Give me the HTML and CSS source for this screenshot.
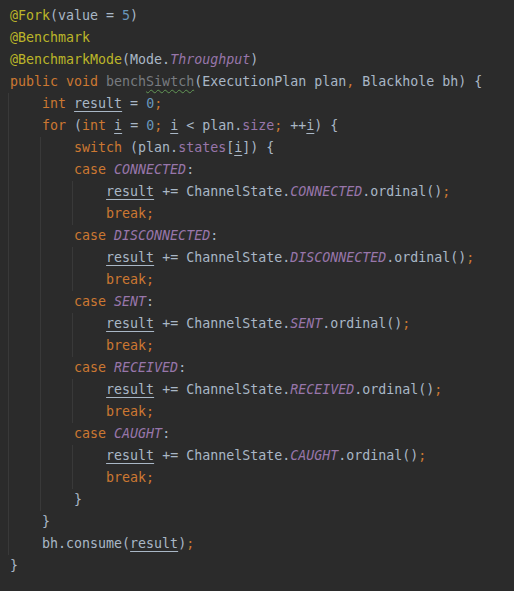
FILE: index.html
```html
<!DOCTYPE html>
<html>
<head>
<meta charset="utf-8">
<link rel="stylesheet" href="styles.css">
</head>
<body>
<div class="code">
<div class="ln"><span class="an">@Fork</span>(value = <span class="nu">5</span>)</div>
<div class="ln"><span class="an">@Benchmark</span></div>
<div class="ln"><span class="an">@BenchmarkMode</span>(Mode.<span class="st">Throughput</span>)</div>
<div class="ln"><span class="kw">public void </span><span class="un">bench<span class="typo">Siwtch</span></span>(ExecutionPlan plan<span class="kw">,</span> Blackhole bh) {</div>
<div class="g g0">
<div class="ln">    <span class="kw">int </span><span class="ra">result</span> = <span class="nu">0</span><span class="kw">;</span></div>
<div class="ln">    <span class="kw">for </span>(<span class="kw">int </span><span class="ra">i</span> = <span class="nu">0</span><span class="kw">; </span><span class="ra">i</span> &lt; plan.<span class="fd">size</span><span class="kw">; </span>++<span class="ra">i</span>) {</div>
<div class="g g1">
<div class="ln">        <span class="kw">switch </span>(plan.<span class="fd">states</span>[<span class="ra">i</span>]) {</div>
<div class="ln">        <span class="kw">case </span><span class="st">CONNECTED</span>:</div>
<div class="g g2">
<div class="ln">            <span class="ra">result</span> += ChannelState.<span class="st">CONNECTED</span>.ordinal()<span class="kw">;</span></div>
<div class="ln">            <span class="kw">break;</span></div>
</div>
<div class="ln">        <span class="kw">case </span><span class="st">DISCONNECTED</span>:</div>
<div class="g g2">
<div class="ln">            <span class="ra">result</span> += ChannelState.<span class="st">DISCONNECTED</span>.ordinal()<span class="kw">;</span></div>
<div class="ln">            <span class="kw">break;</span></div>
</div>
<div class="ln">        <span class="kw">case </span><span class="st">SENT</span>:</div>
<div class="g g2">
<div class="ln">            <span class="ra">result</span> += ChannelState.<span class="st">SENT</span>.ordinal()<span class="kw">;</span></div>
<div class="ln">            <span class="kw">break;</span></div>
</div>
<div class="ln">        <span class="kw">case </span><span class="st">RECEIVED</span>:</div>
<div class="g g2">
<div class="ln">            <span class="ra">result</span> += ChannelState.<span class="st">RECEIVED</span>.ordinal()<span class="kw">;</span></div>
<div class="ln">            <span class="kw">break;</span></div>
</div>
<div class="ln">        <span class="kw">case </span><span class="st">CAUGHT</span>:</div>
<div class="g g2">
<div class="ln">            <span class="ra">result</span> += ChannelState.<span class="st">CAUGHT</span>.ordinal()<span class="kw">;</span></div>
<div class="ln">            <span class="kw">break;</span></div>
</div>
<div class="ln">        }</div>
</div>
<div class="ln">    }</div>
<div class="ln">    bh.consume(<span class="ra">result</span>)<span class="kw">;</span></div>
</div>
<div class="ln">}</div>
</div>
</body>
</html>
```
FILE: styles.css
```css
html, body {
  margin: 0;
  padding: 0;
  background: #2b2b2b;
}
body {
  width: 514px;
  height: 591px;
  overflow: hidden;
}
.code {
  padding: 5px 0 0 10px;
  font-family: "DejaVu Sans Mono", "Liberation Mono", monospace;
  font-size: 13.3px;
  color: #a9b7c6;
}
.ln {
  height: 22px;
  line-height: 22px;
  white-space: pre;
}
.g {
  position: relative;
}
.g::before {
  content: "";
  position: absolute;
  top: 0;
  bottom: 0;
  width: 1px;
  background: #393939;
}
.g0::before { left: -2px; }
.g1::before { left: 30px; }
.g2::before { left: 62px; }
.an { color: #bbb529; }
.kw { color: #cc7832; }
.nu { color: #6897bb; }
.st { color: #9876aa; font-style: italic; }
.fd { color: #9876aa; }
.un { color: #787b80; }
.typo {
  text-decoration: underline wavy #629755;
  text-decoration-thickness: 1px;
  text-underline-offset: 3px;
}
.ra {
  text-decoration: underline;
  text-decoration-thickness: 1px;
  text-underline-offset: 3px;
}
```
